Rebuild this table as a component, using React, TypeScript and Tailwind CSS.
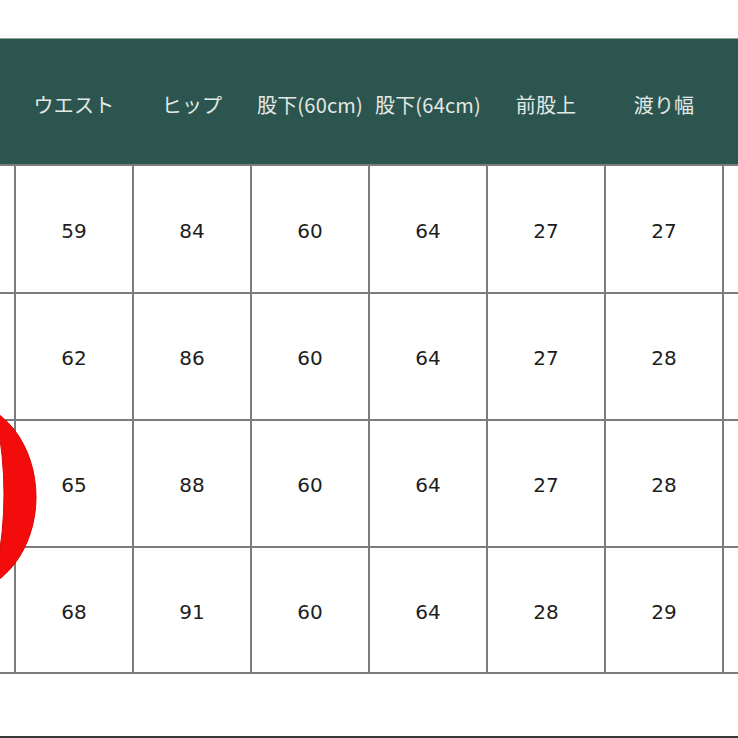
const headers = ['ウエスト', 'ヒップ', '股下(60cm)', '股下(64cm)', '前股上', '渡り幅']

const rows = [
  ['59', '84', '60', '64', '27', '27'],
  ['62', '86', '60', '64', '27', '28'],
  ['65', '88', '60', '64', '27', '28'],
  ['68', '91', '60', '64', '28', '29'],
]

const rowHeights = ['h-[126px]', 'h-[125px]', 'h-[125px]', 'h-[124px]']

function RedMark() {
  return (
    <svg
      className="absolute left-0 top-[400px]"
      width="60"
      height="200"
      viewBox="0 0 60 200"
    >
      <path
        fillRule="evenodd"
        fill="#f20c0c"
        stroke="#d90606"
        strokeWidth="1"
        d="M -116 97 a 76 96 0 1 0 152 0 a 76 96 0 1 0 -152 0 Z M -204 94 a 104 200 0 1 0 208 0 a 104 200 0 1 0 -208 0 Z"
      />
    </svg>
  )
}

export default function App() {
  return (
    <div className="relative w-[738px] h-[738px] overflow-hidden bg-white">
      <div className="h-[38px] bg-white" />

      <div
        className="h-[126px] bg-[#2d554f] border-t border-[#8aa39d] grid grid-cols-[14px_repeat(6,116px)_14px] gap-x-[2px] items-center pt-[6px]"
        style={{ fontFamily: '"Noto Sans CJK JP", "Noto Sans", sans-serif' }}
      >
        <div />
        {headers.map((h) => (
          <div key={h} className="text-center text-[20px] text-[#e2e9e6] whitespace-nowrap tracking-[0.2px]">
            {h}
          </div>
        ))}
        <div />
      </div>

      <div
        className="grid grid-cols-[14px_repeat(6,116px)_14px] gap-[2px] py-[2px] bg-[#7c7c7c]"
        style={{ fontFamily: '"DejaVu Sans", Verdana, sans-serif' }}
      >
        {rows.map((row, i) => (
          <div key={i} className="contents">
            <div className={`${rowHeights[i]} bg-white`} />
            {row.map((v, j) => (
              <div
                key={j}
                className={`${rowHeights[i]} bg-white flex items-center justify-center text-[20px] text-[#1e1e1e] pt-[3px]`}
              >
                {v}
              </div>
            ))}
            <div className={`${rowHeights[i]} bg-white`} />
          </div>
        ))}
      </div>

      <div className="h-[62px] bg-white" />
      <div className="h-[2px] bg-[#3a3a3a]" />

      <RedMark />
    </div>
  )
}
